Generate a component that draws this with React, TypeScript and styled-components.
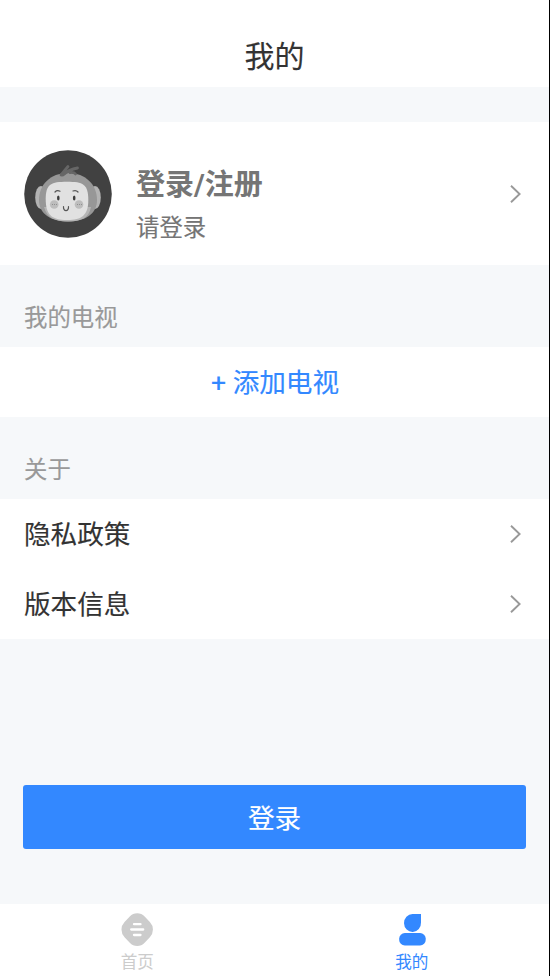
import React from "react";
import styled, { createGlobalStyle } from "styled-components";

const Global = createGlobalStyle`
  * { box-sizing: border-box; }
  body {
    margin: 0;
    background: #000;
    font-family: Roboto, "Noto Sans CJK SC", sans-serif;
    -webkit-text-stroke: 0.15px currentColor;
  }
  button { font-family: inherit; border: 0; margin: 0; padding: 0; background: none; }
`;

const Screen = styled.div`
  width: 549px;
  height: 976px;
  display: flex;
  flex-direction: column;
  background: #f6f8fa;
  overflow: hidden;
`;

const Header = styled.header`
  height: 87px;
  padding-top: 27px;
  background: #fff;
  text-align: center;
  font-size: 30px;
  line-height: 60px;
  color: #333;
`;

const Profile = styled.section`
  height: 143px;
  margin-top: 35px;
  padding: 0 27px 0 23.5px;
  display: flex;
  align-items: center;
  background: #fff;
`;

const ProfileText = styled.div`
  flex: 1;
  margin: 24px 0 0 24.5px;
  color: #757575;
`;

const ProfileName = styled.div`
  font-size: 29px;
  font-weight: 700;
  line-height: 44px;
  -webkit-text-stroke: 0;
`;

const ProfileHint = styled.div`
  font-size: 23.4px;
  line-height: 42px;
`;

const SectionTitle = styled.h2`
  height: 82px;
  margin: 0;
  padding: 0 24px 8px;
  display: flex;
  align-items: flex-end;
  font-size: 23.4px;
  font-weight: 400;
  line-height: 42px;
  color: #999;
`;

const AddButton = styled.button`
  height: 70px;
  padding: 2px 0 0 1px;
  background: #fff;
  color: #3388ff;
  font-size: 26.6px;
  line-height: 68px;
`;

const Row = styled.div`
  height: 70px;
  padding: 0 27px 0 24px;
  display: flex;
  align-items: center;
  justify-content: space-between;
  background: #fff;
  color: #333;
  font-size: 26.6px;
  line-height: 68px;
`;

const RowLabel = styled.span`
  padding-top: 2px;
`;

const LoginButton = styled.button`
  height: 64px;
  margin: 146.4px 23px 0;
  padding-top: 4px;
  border-radius: 3px;
  background: #3388ff;
  color: #fff;
  font-size: 26.6px;
  line-height: 60px;
`;

const TabBar = styled.nav`
  height: 72px;
  margin-top: auto;
  display: flex;
  background: #fff;
  -webkit-text-stroke: 0;
`;

const Tab = styled.div<{ $active?: boolean }>`
  flex: 1;
  padding-top: 8px;
  display: flex;
  flex-direction: column;
  align-items: center;
  color: ${(p) => (p.$active ? "#3388ff" : "#ccc")};
  font-size: 16.6px;
  line-height: 26px;

  svg { display: block; flex: none; margin-bottom: 2px; }
`;

const Chevron = () => (
  <svg width="12" height="20" viewBox="0 0 12 20" fill="none" stroke="#999" strokeWidth="1.900">
    <path d="M1 1.800 9.600 10 1 18.200" />
  </svg>
);

const Avatar = () => (
  <svg width="88" height="88" viewBox="0 0 88 88">
    <circle cx="44" cy="44" r="43.8" fill="#414141" />
    <ellipse cx="17" cy="47.5" rx="5.8" ry="11.5" fill="#b3b3b3" />
    <ellipse cx="71" cy="47.5" rx="5.8" ry="11.5" fill="#b3b3b3" />
    <path d="M44 23C26 23 15 35 15 50C15 64 27 71.5 44 71.5S73 64 73 50C73 35 62 23 44 23Z" fill="#979797" />
    <path d="M20 57C23 68 31 71.500 44 71.500S65 68 67 57Z" fill="#b5b5b5" />
    <path d="M43 31.700C27 31.700 21.700 34 21.700 49C21.700 65 28 70 43 70S64.300 65 64.300 50C64.300 34 59 31.700 43 31.700Z" fill="#e1e1e1" />
    <path d="M37 25 44 16.500M39 25Q45 19.500 53.500 18M46 22.500Q50 22 51.500 24" fill="none" stroke="#666" strokeWidth="2.800" strokeLinecap="round" />
    <circle cx="30.200" cy="54.500" r="4.300" fill="#bdbdbd" />
    <circle cx="55" cy="54.500" r="4.300" fill="#bdbdbd" />
    <path d="M28 54.500h.8M30 54.500h.8M32 54.500h.8M53 54.500h.8M55 54.500h.8M57 54.500h.8" stroke="#858585" strokeWidth="1" />
    <ellipse cx="34.300" cy="48" rx="1.300" ry="2.500" fill="#3c3c3c" />
    <ellipse cx="50.200" cy="48" rx="1.300" ry="2.500" fill="#3c3c3c" />
    <path d="M31 42Q33 39.900 36 41.200M49 41Q52 39.700 54 42M39.500 56.500C39 62 45 62 44.500 56.500" fill="none" stroke="#555" strokeWidth="1.200" strokeLinecap="round" />
  </svg>
);

const HomeIcon = () => (
  <svg width="34" height="36" viewBox="0 0 34 36">
    <rect x="-14.200" y="-14.200" width="28.400" height="28.400" rx="10.500" fill="#ccc" transform="translate(17.200 17.600) scale(1 1.040) rotate(45)" />
    <path d="M14 12.200h6.500M11.200 17.500h12M14 23h6.500" stroke="#fff" strokeWidth="2.300" strokeLinecap="round" />
  </svg>
);

const UserIcon = () => (
  <svg width="34" height="36" viewBox="0 0 34 36" fill="#3388ff">
    <path d="M17.500 2H26V10.500A8.500 9 0 1 1 17.500 2Z" />
    <rect x="4.200" y="21" width="26.500" height="12.500" rx="5.600" />
  </svg>
);

export default function App() {
  return (
    <>
      <Global />
      <Screen>
        <Header>我的</Header>
        <Profile>
          <Avatar />
          <ProfileText>
            <ProfileName>登录/注册</ProfileName>
            <ProfileHint>请登录</ProfileHint>
          </ProfileText>
          <Chevron />
        </Profile>
        <SectionTitle>我的电视</SectionTitle>
        <AddButton>+ 添加电视</AddButton>
        <SectionTitle>关于</SectionTitle>
        <Row>
          <RowLabel>隐私政策</RowLabel>
          <Chevron />
        </Row>
        <Row>
          <RowLabel>版本信息</RowLabel>
          <Chevron />
        </Row>
        <LoginButton>登录</LoginButton>
        <TabBar>
          <Tab>
            <HomeIcon />
            首页
          </Tab>
          <Tab $active>
            <UserIcon />
            我的
          </Tab>
        </TabBar>
      </Screen>
    </>
  );
}
